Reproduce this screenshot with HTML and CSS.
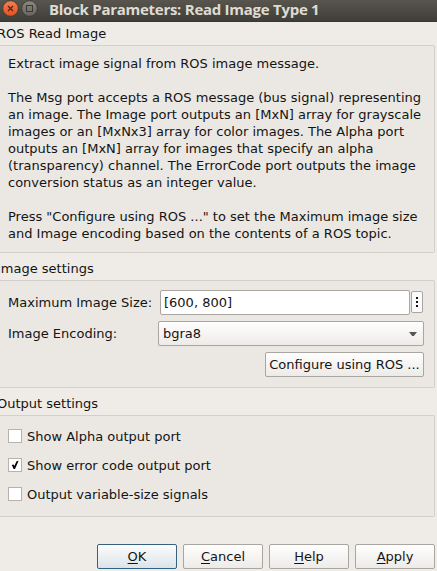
FILE: index.html
```html
<!DOCTYPE html>
<html lang="en">
<head>
<meta charset="utf-8">
<title>Block Parameters: Read Image Type 1</title>
<link rel="stylesheet" href="styles.css">
</head>
<body>
<header class="titlebar">
  <svg class="window-icons" width="40" height="22" viewBox="0 0 40 22">
    <defs>
      <linearGradient id="close" x1="0" y1="0" x2="0" y2="1"><stop offset="0" stop-color="#f58056"/><stop offset="1" stop-color="#e2501f"/></linearGradient>
      <linearGradient id="max" x1="0" y1="0" x2="0" y2="1"><stop offset="0" stop-color="#8b8880"/><stop offset="1" stop-color="#66645d"/></linearGradient>
    </defs>
    <circle cx="10.5" cy="8.5" r="7.8" fill="url(#close)" stroke="#373530" stroke-width=".8"/>
    <path d="M8 6l5 5M13 6l-5 5" stroke="#5a2411" stroke-width="1.3"/>
    <circle cx="29.5" cy="8.5" r="7.8" fill="url(#max)" stroke="#373530" stroke-width=".8"/>
    <rect x="26.5" y="5.5" width="6" height="6" fill="none" stroke="#3b3934"/>
  </svg>
  <h1 class="title">Block Parameters: Read Image Type 1</h1>
</header>
<main class="dialog">
  <h2 class="legend">ROS Read Image</h2>
  <section class="group description">
    <p>Extract image signal from ROS image message.</p>
    <p>The Msg port accepts a ROS message (bus signal) representing<br>an image. The Image port outputs an [MxN] array for grayscale<br>images or an [MxNx3] array for color images. The Alpha port<br>outputs an [MxN] array for images that specify an alpha<br>(transparency) channel. The ErrorCode port outputs the image<br>conversion status as an integer value.</p>
    <p>Press "Configure using ROS ..." to set the Maximum image size<br>and Image encoding based on the contents of a ROS topic.</p>
  </section>
  <h2 class="legend">Image settings</h2>
  <section class="group settings">
    <div class="row">
      <span class="label size-label">Maximum Image Size:</span>
      <div class="field">[600, 800]</div>
      <div class="more"><i></i><i></i><i></i></div>
    </div>
    <div class="row">
      <span class="label encoding-label">Image Encoding:</span>
      <div class="combo">bgra8<svg width="8" height="4" viewBox="0 0 8 4"><path d="M0 0h8L4.8 4H3.2z" fill="#555"/></svg></div>
    </div>
    <div class="row end"><div class="button configure">Configure using ROS ...</div></div>
  </section>
  <h2 class="legend">Output settings</h2>
  <section class="group outputs">
    <div class="option"><span class="check"></span>Show Alpha output port</div>
    <div class="option"><span class="check"><svg width="12" height="12" viewBox="0 0 12 12"><path d="M2.8 6.1L4.6 5.4L5.3 7L7.6 2.3L9.6 1.8L6 10H4.6z" fill="#000"/></svg></span>Show error code output port</div>
    <div class="option"><span class="check"></span>Output variable-size signals</div>
  </section>
  <footer class="actions">
    <div class="button default"><span><u>O</u>K</span></div>
    <div class="button"><span><u>C</u>ancel</span></div>
    <div class="button"><span><u>H</u>elp</span></div>
    <div class="button"><span><u>A</u>pply</span></div>
  </footer>
</main>
</body>
</html>
```
FILE: styles.css
```css
* { box-sizing: border-box; }
body {
  margin: 0;
  width: 437px;
  height: 571px;
  overflow: hidden;
  background: #efece7;
  color: #141414;
  font: 13px/17px "DejaVu Sans", sans-serif;
}
h1, h2, p { margin: 0; }
.titlebar {
  display: flex;
  height: 22px;
  background: linear-gradient(#57554d, #403e39);
  border-bottom: 1px solid #3a3833;
}
.window-icons { flex: none; }
.title {
  padding-left: 9px;
  color: #dfdbd2;
  font: bold 15px/18px "Open Sans", "Noto Sans", sans-serif;
  letter-spacing: -0.27px;
  white-space: nowrap;
}
.legend {
  height: 27px;
  margin-left: -3px;
  padding-top: 7px;
  font-size: 13px;
  font-weight: normal;
}
.dialog > .legend:first-child { height: 23px; padding-top: 3px; }
.group {
  width: 435px;
  border: 1px solid #d3d0cb;
  border-left: 0;
  border-radius: 0 2px 2px 0;
  background: #ebe8e3;
  padding-left: 8px;
}
.description {
  display: flex;
  flex-direction: column;
  gap: 17px;
  height: 208px;
  padding-top: 9px;
  white-space: nowrap;
}
.settings {
  display: flex;
  flex-direction: column;
  gap: 6px;
  height: 108px;
  padding: 9px 10px 0 8px;
}
.row { display: flex; align-items: center; height: 25px; }
.end { justify-content: flex-end; }
.label { flex: none; white-space: nowrap; }
.size-label { width: 152px; }
.encoding-label { width: 150px; }
.field {
  width: 250px;
  height: 25px;
  padding: 3px 3px;
  border: 1px solid #a9a6a2;
  border-radius: 2px;
  background: #fff;
}
.more {
  display: flex;
  flex-direction: column;
  align-items: center;
  justify-content: center;
  gap: 2px;
  width: 12px;
  height: 22px;
  margin: 0 0 1px 1px;
  border: 1px solid #a9a6a2;
  border-radius: 2px;
  background: #fafafa;
}
.more i { width: 2px; height: 2px; background: #111; }
.combo, .button {
  display: flex;
  align-items: center;
  height: 25px;
  border: 1px solid #a9a6a2;
  border-radius: 2px;
  background: linear-gradient(#fefefe, #edebe8);
}
.combo { width: 266px; justify-content: space-between; padding: 0 6px 0 4px; }
.button { width: 80px; justify-content: center; white-space: nowrap; }
.button.configure { width: 159px; }
.button.default { border-color: #36617f; background: linear-gradient(#fbfcfc, #dce4e9); }
.outputs {
  display: flex;
  flex-direction: column;
  gap: 12px;
  height: 102px;
  padding-top: 12px;
}
.option { display: flex; align-items: center; gap: 5px; height: 17px; }
.check { width: 14px; height: 14px; margin-top: -1px; border: 1px solid #b6b3af; background: #fff; }
.check svg { display: block; }
.actions {
  display: flex;
  justify-content: flex-end;
  gap: 6px;
  padding: 27px 2px 0 0;
}
u { text-underline-offset: 2px; text-decoration-thickness: 1px; text-decoration-skip-ink: none; }
```
